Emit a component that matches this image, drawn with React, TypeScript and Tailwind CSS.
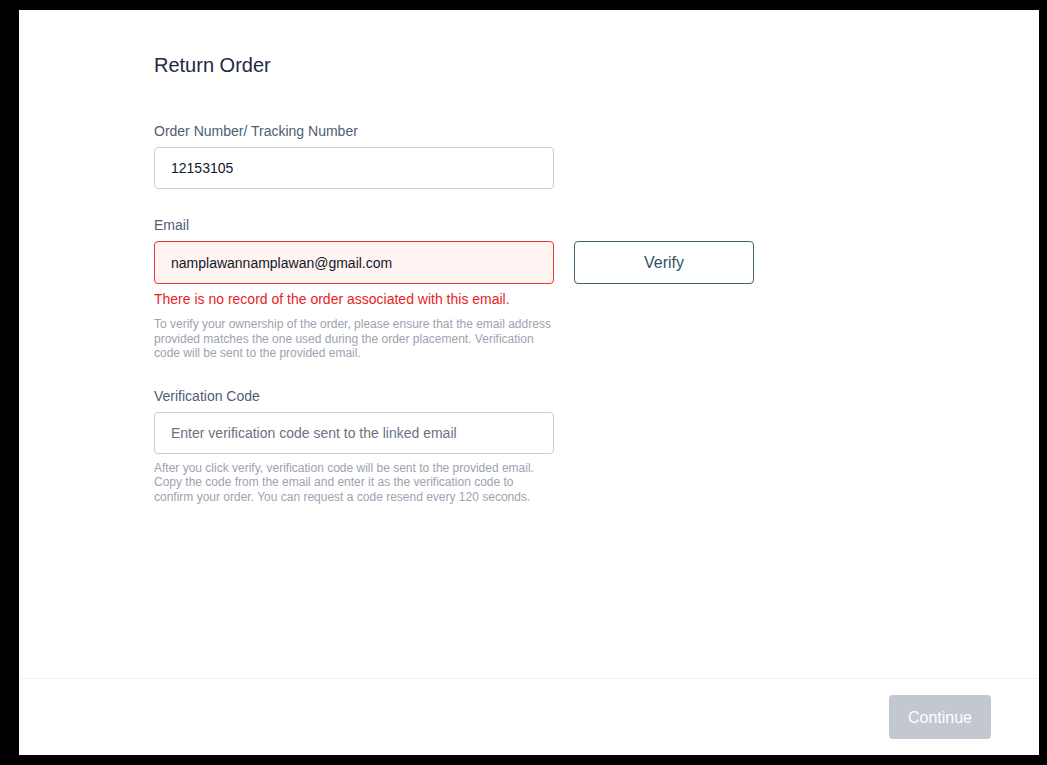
export default function App() {
  return (
    <div
      className="h-screen w-full bg-black pt-[10px] pb-[10px] pl-[19px] pr-[8px]"
      style={{ fontFamily: '"Liberation Sans", Arial, sans-serif' }}
    >
      <div className="flex h-full flex-col bg-white">
        <div className="flex-1 pl-[135px] pt-[41px]">
          <h1 className="text-[20px] leading-[28px] text-[#1c2940]">Return Order</h1>

          <label className="mt-[42px] block text-[14px] leading-[20px] text-[#4f5d75]">
            Order Number/ Tracking Number
          </label>
          <input
            type="text"
            defaultValue="12153105"
            className="mt-[6px] block h-[42px] w-[400px] rounded-[4px] border border-[#c9cdd4] px-4 text-[14px] text-[#111827] outline-none"
          />

          <label className="mt-[26px] block text-[14px] leading-[20px] text-[#4f5d75]">Email</label>
          <div className="mt-[6px] flex gap-[20px]">
            <input
              type="email"
              defaultValue="namplawannamplawan@gmail.com"
              className="block h-[43px] w-[400px] rounded-[4px] border border-[#e5392f] bg-[#fff4f2] px-4 text-[14px] text-[#111827] outline-none"
            />
            <button className="h-[43px] w-[180px] rounded-[4px] border border-[#3d5f6e] bg-white pt-px text-[16px] text-[#2d5365]">
              Verify
            </button>
          </div>
          <p className="mt-[5px] text-[14px] leading-[20px] text-[#e8231e]">
            There is no record of the order associated with this email.
          </p>
          <p className="mt-[8px] w-[400px] text-[12px] leading-[14.5px] text-[#9ca3af]">
            To verify your ownership of the order, please ensure that the email address provided matches the one
            used during the order placement. Verification code will be sent to the provided email.
          </p>

          <label className="mt-[25px] block text-[14px] leading-[20px] text-[#4f5d75]">Verification Code</label>
          <input
            type="text"
            placeholder="Enter verification code sent to the linked email"
            className="mt-[6px] block h-[42px] w-[400px] rounded-[4px] border border-[#c9cdd4] px-4 text-[14px] text-[#111827] outline-none placeholder:text-[#6b7280]"
          />
          <p className="mt-[7px] w-[400px] text-[12px] leading-[14.5px] text-[#9ca3af]">
            After you click verify, verification code will be sent to the provided email. Copy the code from the
            email and enter it as the verification code to confirm your order. You can request a code resend every
            120 seconds.
          </p>
        </div>

        <div className="flex h-[77px] items-start justify-end border-t border-[#f1f1f3] pr-[48px] pt-[16px]">
          <button
            disabled
            className="h-[44px] w-[102px] rounded-[4px] bg-[#c3c7cf] pt-px text-[16px] text-white"
          >
            Continue
          </button>
        </div>
      </div>
    </div>
  );
}
